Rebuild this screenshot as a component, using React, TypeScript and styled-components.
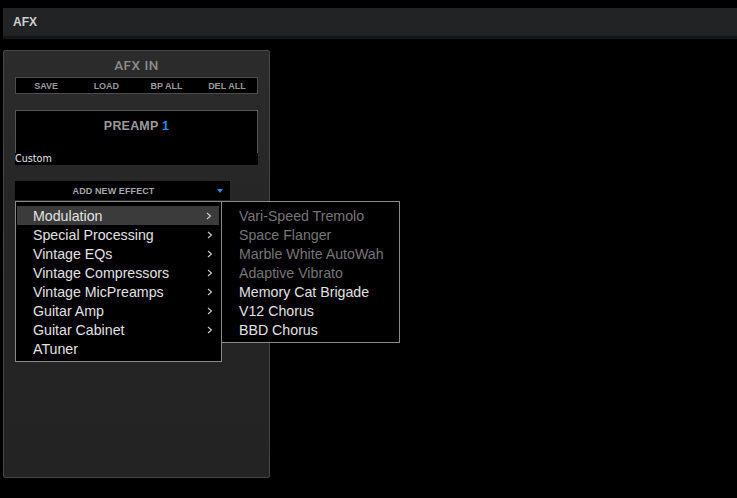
import React from "react";
import styled, { createGlobalStyle } from "styled-components";

const Global = createGlobalStyle`
  html, body { margin: 0; padding: 0; background: #000; }
  body { font-family: "Liberation Sans", Arial, sans-serif; }
`;

const Page = styled.div`
  padding-top: 8px;
  width: 737px;
  height: 490px;
  background: #000;
`;

const Header = styled.div`
  margin-left: 3px;
  height: 28px;
  background: #222325;
  border-bottom: 3px solid #151516;
  display: flex;
  align-items: center;
  padding-left: 10px;
  color: #cfcfcf;
  font-weight: bold;
  font-size: 12px;
`;

const Panel = styled.div`
  margin: 11px 0 0 3px;
  width: 243px;
  height: 426px;
  border: 1px solid #474747;
  border-radius: 2px;
  background: linear-gradient(#2c2c2c, #252525 40%, #232323);
  display: flex;
  flex-direction: column;
  padding: 0 11px;
  box-sizing: content-box;
`;

const Title = styled.div`
  height: 26px;
  box-sizing: border-box;
  display: flex;
  align-items: center;
  justify-content: center;
  color: #8c8c8c;
  font-family: Roboto, "Liberation Sans", sans-serif;
  font-weight: 500;
  font-size: 13.5px;
  letter-spacing: 0.5px;
  padding-top: 1px;
`;

const ButtonBar = styled.div`
  width: 241px;
  height: 15px;
  background: #000;
  border: 1px solid #4d4d4d;
  display: grid;
  grid-template-columns: repeat(4, 1fr);
`;

const BarButton = styled.div`
  display: flex;
  align-items: center;
  justify-content: center;
  color: #9b9b9b;
  font-size: 9px;
  font-weight: bold;
`;

const PreampBox = styled.div`
  margin-top: 16px;
  width: 241px;
  height: 34px;
  background: #000;
  border: 1px solid #555;
  border-bottom: none;
  display: flex;
  justify-content: center;
  padding-top: 8px;
  box-sizing: content-box;
`;

const PreampLabel = styled.span`
  color: #9a9a9a;
  font-weight: bold;
  font-size: 12.5px;
  letter-spacing: 0.2px;
`;

const PreampNum = styled.span`
  color: #2b8fe0;
`;

const CustomRow = styled.div`
  width: 243px;
  height: 12px;
  background: #000;
  color: #e6e6e6;
  font-family: "DejaVu Sans", sans-serif;
  font-size: 9.6px;
  line-height: 12px;
`;

const AddWrap = styled.div`
  position: relative;
  margin-top: 16px;
  width: 215px;
`;

const AddBar = styled.div`
  height: 19px;
  background: #000;
  display: flex;
  align-items: center;
  justify-content: center;
  padding-right: 18px;
  color: #a8a8a8;
  font-size: 9px;
  font-weight: bold;
  letter-spacing: 0.1px;
`;

const Caret = styled.span`
  position: absolute;
  right: 7px;
  top: 8px;
  width: 0;
  height: 0;
  border-left: 3.5px solid transparent;
  border-right: 3.5px solid transparent;
  border-top: 4px solid #2b8fe0;
`;

const Menu = styled.div<{ $left: number; $width: number }>`
  position: absolute;
  top: 20px;
  left: ${(p) => p.$left}px;
  width: ${(p) => p.$width}px;
  background: #000;
  border: 1px solid #8a8a8a;
  box-sizing: border-box;
  padding: 4px 1px 3px;
  font-family: "Liberation Sans", Arial, sans-serif;
  font-size: 14.2px;
`;

const Item = styled.div<{ $active?: boolean; $disabled?: boolean }>`
  height: 19px;
  box-sizing: border-box;
  padding: 1px 0 0 16px;
  display: flex;
  align-items: center;
  justify-content: space-between;
  color: ${(p) => (p.$disabled ? "#767676" : "#e2e2e2")};
  background: ${(p) => (p.$active ? "#3b3b3b" : "transparent")};
  margin-right: ${(p) => (p.$active ? "1px" : "0")};
`;

const Chevron = styled.svg`
  width: 6px;
  height: 8px;
  margin-right: 7px;
`;

const mainItems = [
  { label: "Modulation", sub: true },
  { label: "Special Processing", sub: true },
  { label: "Vintage EQs", sub: true },
  { label: "Vintage Compressors", sub: true },
  { label: "Vintage MicPreamps", sub: true },
  { label: "Guitar Amp", sub: true },
  { label: "Guitar Cabinet", sub: true },
  { label: "ATuner", sub: false },
];

const subItems = [
  { label: "Vari-Speed Tremolo", disabled: true },
  { label: "Space Flanger", disabled: true },
  { label: "Marble White AutoWah", disabled: true },
  { label: "Adaptive Vibrato", disabled: true },
  { label: "Memory Cat Brigade", disabled: false },
  { label: "V12 Chorus", disabled: false },
  { label: "BBD Chorus", disabled: false },
];

export default function App() {
  return (
    <Page>
      <Global />
      <Header>AFX</Header>
      <Panel>
        <Title>AFX IN</Title>
        <ButtonBar>
          <BarButton>SAVE</BarButton>
          <BarButton>LOAD</BarButton>
          <BarButton>BP ALL</BarButton>
          <BarButton>DEL ALL</BarButton>
        </ButtonBar>
        <PreampBox>
          <PreampLabel>
            PREAMP <PreampNum>1</PreampNum>
          </PreampLabel>
        </PreampBox>
        <CustomRow>Custom</CustomRow>
        <AddWrap>
          <AddBar>ADD NEW EFFECT</AddBar>
          <Caret />
          <Menu $left={0} $width={207}>
            {mainItems.map((it, i) => (
              <Item key={it.label} $active={i === 0}>
                <span>{it.label}</span>
                {it.sub && (
                  <Chevron viewBox="0 0 6 8">
                    <polyline points="1,1 4.5,4 1,7" fill="none" stroke="#cfcfcf" strokeWidth="1.1" />
                  </Chevron>
                )}
              </Item>
            ))}
          </Menu>
          <Menu $left={206} $width={179}>
            {subItems.map((it) => (
              <Item key={it.label} $disabled={it.disabled}>
                <span>{it.label}</span>
              </Item>
            ))}
          </Menu>
        </AddWrap>
      </Panel>
    </Page>
  );
}
